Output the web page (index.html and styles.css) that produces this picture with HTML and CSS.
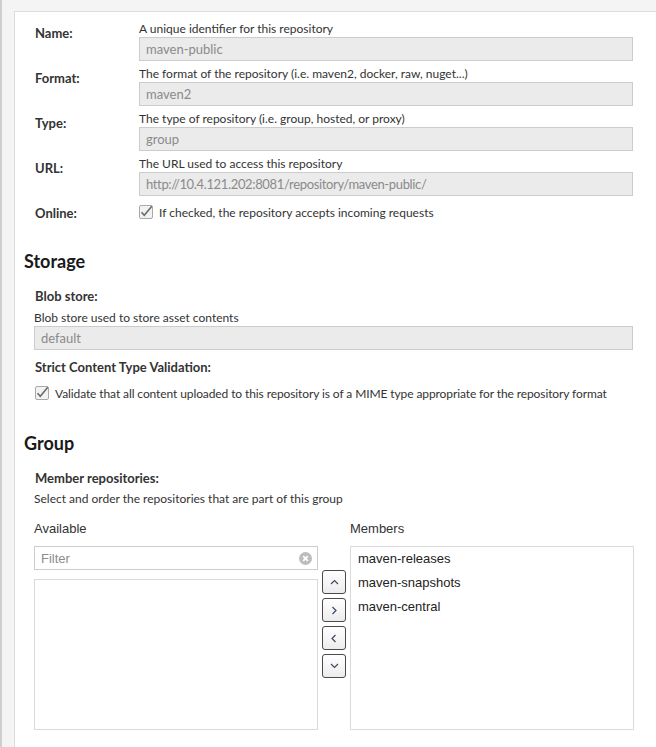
FILE: index.html
```html
<!DOCTYPE html>
<html>
<head>
<meta charset="utf-8">
<link rel="stylesheet" href="styles.css">
</head>
<body>
<div class="page">
  <div class="panel">
    <div class="fields">
      <div class="row">
        <div class="label">Name:</div>
        <div class="field">
          <div class="desc">A unique identifier for this repository</div>
          <div class="input">maven-public</div>
        </div>
      </div>
      <div class="row">
        <div class="label">Format:</div>
        <div class="field">
          <div class="desc">The format of the repository (i.e. maven2, docker, raw, nuget...)</div>
          <div class="input">maven2</div>
        </div>
      </div>
      <div class="row">
        <div class="label">Type:</div>
        <div class="field">
          <div class="desc">The type of repository (i.e. group, hosted, or proxy)</div>
          <div class="input">group</div>
        </div>
      </div>
      <div class="row">
        <div class="label">URL:</div>
        <div class="field">
          <div class="desc">The URL used to access this repository</div>
          <div class="input url">http://10.4.121.202:8081/repository/maven-public/</div>
        </div>
      </div>
      <div class="row row-check">
        <div class="label">Online:</div>
        <div class="check">
          <svg class="cb" width="14" height="14" viewBox="0 0 14 14"><rect x="0.5" y="0.5" width="13" height="13" rx="1.5" fill="#f2f2f2" stroke="#a9a9a9"/><path d="M2.5 7.2 L5.3 10.3 L12.8 1.2" fill="none" stroke="#6b6b6b" stroke-width="1.6"/></svg>
          <span>If checked, the repository accepts incoming requests</span>
        </div>
      </div>
    </div>

    <h2 class="heading h-storage">Storage</h2>
    <div class="section">
      <div class="label blk">Blob store:</div>
      <div class="desc d-blob">Blob store used to store asset contents</div>
      <div class="input">default</div>
      <div class="label blk l-strict">Strict Content Type Validation:</div>
      <div class="check c-strict">
        <svg class="cb" width="14" height="14" viewBox="0 0 14 14"><rect x="0.5" y="0.5" width="13" height="13" rx="1.5" fill="#f2f2f2" stroke="#a9a9a9"/><path d="M2.5 7.2 L5.3 10.3 L12.8 1.2" fill="none" stroke="#6b6b6b" stroke-width="1.6"/></svg>
        <span class="tight">Validate that all content uploaded to this repository is of a MIME type appropriate for the repository format</span>
      </div>
    </div>

    <h2 class="heading h-group">Group</h2>
    <div class="section">
      <div class="label blk l-member">Member repositories:</div>
      <div class="desc d-select">Select and order the repositories that are part of this group</div>
      <div class="selector">
        <div class="col">
          <div class="col-title">Available</div>
          <div class="filter">
            <span class="ph">Filter</span>
            <svg class="clear" width="13" height="13" viewBox="0 0 13 13"><circle cx="6.5" cy="6.5" r="6.5" fill="#bdbdbd"/><path d="M4.2 4.2 L8.8 8.8 M8.8 4.2 L4.2 8.8" stroke="#fff" stroke-width="1.8"/></svg>
          </div>
          <div class="list avail"></div>
        </div>
        <div class="buttons">
          <div class="btn"><svg width="9" height="6" viewBox="0 0 9 6"><path d="M1 5 L4.5 1.5 L8 5" fill="none" stroke="#3b4a66" stroke-width="1.2"/></svg></div>
          <div class="btn"><svg width="6" height="9" viewBox="0 0 6 9"><path d="M1.5 1 L5 4.5 L1.5 8" fill="none" stroke="#3b4a66" stroke-width="1.2"/></svg></div>
          <div class="btn"><svg width="6" height="9" viewBox="0 0 6 9"><path d="M4.5 1 L1 4.5 L4.5 8" fill="none" stroke="#3b4a66" stroke-width="1.2"/></svg></div>
          <div class="btn"><svg width="9" height="6" viewBox="0 0 9 6"><path d="M1 1 L4.5 4.5 L8 1" fill="none" stroke="#3b4a66" stroke-width="1.2"/></svg></div>
        </div>
        <div class="col">
          <div class="col-title">Members</div>
          <div class="list members">
            <div class="item">maven-releases</div>
            <div class="item">maven-snapshots</div>
            <div class="item">maven-central</div>
          </div>
        </div>
      </div>
    </div>
  </div>
</div>
</body>
</html>
```

FILE: styles.css
```css
html, body {
  margin: 0;
  padding: 0;
  height: 100%;
  overflow: hidden;
}
body {
  background: #f4f4f4;
  font-family: Lato, "Liberation Sans", sans-serif;
  color: #333;
}
.page {
  border-left: 2px solid #cfcfcf;
  padding: 11px 0 0 12px;
  min-height: 100%;
  box-sizing: border-box;
}
.panel {
  background: #fff;
  border-left: 1px solid #dcdcdc;
  border-top: 1px solid #dcdcdc;
  padding: 10px 23px 17px 9px;
}
.fields {
  padding-left: 10px;
}
.row {
  display: grid;
  grid-template-columns: 105px 1fr;
  margin-bottom: 6px;
}
.label {
  font-size: 13px;
  font-weight: 700;
  line-height: 14px;
  padding-top: 4px;
  padding-left: 1px;
  color: #333;
}
.desc {
  font-size: 12px;
  line-height: 14px;
  color: #333;
}
.input {
  margin-top: 1px;
  height: 24px;
  box-sizing: border-box;
  border: 1px solid #cccccc;
  background: #ebebeb;
  color: #8a8a8a;
  font-size: 13px;
  line-height: 22px;
  padding-left: 6px;
}
.input.url {
  letter-spacing: -0.35px;
}
.row-check {
  height: 20px;
}
.row-check .label {
  padding-top: 4px;
}
.check {
  display: flex;
  align-items: center;
  gap: 6px;
  font-size: 12px;
  height: 20px;
  color: #333;
}
.tight {
  letter-spacing: -0.1px;
}
.cb {
  flex: none;
}
.heading {
  margin: 0;
  font-size: 18px;
  line-height: 22px;
  font-weight: 700;
  color: #1a1a1a;
}
.h-storage {
  margin-top: 28px;
}
.h-group {
  margin-top: 29px;
}
.section {
  padding-left: 10px;
}
.label.blk {
  padding-top: 0;
  margin-top: 17px;
}
.d-blob {
  margin-top: 8px;
}
.label.l-strict {
  margin-top: 10px;
}
.c-strict {
  margin-top: 9px;
  padding-left: 1px;
}
.d-select {
  margin-top: 7px;
}
.selector {
  display: flex;
  gap: 4px;
  margin-top: 15px;
}
.col {
  width: 284px;
  flex: none;
}
.col-title {
  font-family: "Liberation Sans", Arial, sans-serif;
  font-size: 13px;
  line-height: 16px;
  color: #333;
  margin-bottom: 9px;
}
.filter {
  height: 24px;
  box-sizing: border-box;
  border: 1px solid #cccccc;
  display: flex;
  align-items: center;
  justify-content: space-between;
  padding: 0 5px 0 6px;
  font-family: "Liberation Sans", Arial, sans-serif;
  font-size: 13px;
}
.ph {
  color: #8c8c8c;
}
.list {
  border: 1px solid #dadada;
  box-sizing: border-box;
}
.avail {
  margin-top: 9px;
  height: 151px;
}
.members {
  height: 184px;
}
.item {
  font-family: "Liberation Sans", Arial, sans-serif;
  font-size: 13px;
  line-height: 24px;
  padding-left: 7px;
  color: #222;
}
.buttons {
  width: 24px;
  flex: none;
  display: flex;
  flex-direction: column;
  gap: 4px;
  padding-top: 49px;
}
.btn {
  width: 24px;
  height: 24px;
  box-sizing: border-box;
  border: 1px solid #4a4a4a;
  border-radius: 3px;
  background: linear-gradient(#ffffff, #ececec);
  display: flex;
  align-items: center;
  justify-content: center;
}
```
